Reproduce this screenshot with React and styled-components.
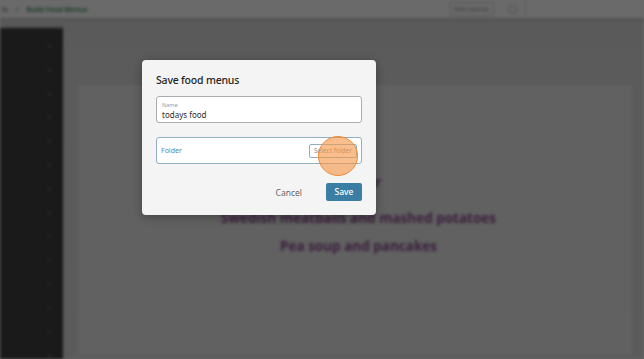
import React from "react";
import styled, { createGlobalStyle } from "styled-components";

const GlobalStyle = createGlobalStyle`
  html, body {
    margin: 0;
    padding: 0;
    width: 644px;
    height: 359px;
    overflow: hidden;
    font-family: "Noto Sans", "Open Sans", sans-serif;
  }
`;

const menus = ["Swedish meatballs and mashed potatoes", "Pea soup and pancakes"];

export default function App() {
  return (
    <>
      <GlobalStyle />
      <Screen>
        <Page>
          <TopBar>
            <Crumbs>
              <CrumbMuted>ts</CrumbMuted>
              <CrumbMuted>/</CrumbMuted>
              <CrumbCurrent>Build Food Menus</CrumbCurrent>
            </Crumbs>
            <TopActions>
              <GhostButton>Edit Layouts</GhostButton>
              <RoundIcon />
              <Divider />
            </TopActions>
          </TopBar>
          <Body>
            <Sidebar>
              {Array.from({ length: 14 }).map((_, i) => (
                <NavDot key={i} />
              ))}
            </Sidebar>
            <Main>
              <Panel>
                <MenuHeading>Dinner</MenuHeading>
                {menus.map(m => (
                  <MenuLine key={m}>{m}</MenuLine>
                ))}
              </Panel>
            </Main>
          </Body>
        </Page>

        <Backdrop />

        <Dialog>
          <Title>Save food menus</Title>
          <NameField>
            <FieldLabel>Name</FieldLabel>
            <FieldValue>todays food</FieldValue>
          </NameField>
          <FolderField>
            <FolderLabel>Folder</FolderLabel>
            <SelectButton>Select folder</SelectButton>
          </FolderField>
          <Actions>
            <TextButton>Cancel</TextButton>
            <PrimaryButton>Save</PrimaryButton>
          </Actions>
          <ClickMarker />
        </Dialog>
      </Screen>
    </>
  );
}

const Screen = styled.div`
  position: relative;
  width: 644px;
  height: 359px;
  overflow: hidden;
`;

const Page = styled.div`
  display: flex;
  flex-direction: column;
  height: 100%;
  background: #d9d9d9;
  filter: blur(1.4px);
`;

const TopBar = styled.header`
  height: 18px;
  flex: none;
  background: #fcfcfc;
  display: flex;
  align-items: center;
  justify-content: space-between;
  box-shadow: 0 2px 4px rgba(0, 0, 0, 0.12);
  position: relative;
  z-index: 1;
`;

const Crumbs = styled.div`
  display: flex;
  align-items: center;
  gap: 8px;
  font-size: 7px;
  margin-left: 2px;
`;

const CrumbMuted = styled.span`
  color: #555;
`;

const CrumbCurrent = styled.span`
  color: #2e8a50;
  font-weight: 600;
`;

const TopActions = styled.div`
  display: flex;
  align-items: center;
  gap: 14px;
  margin-right: 118px;
`;

const GhostButton = styled.div`
  height: 12px;
  padding: 0 4px;
  border: 1px solid #cfcfcf;
  border-radius: 2px;
  font-size: 6px;
  line-height: 12px;
  color: #777;
`;

const RoundIcon = styled.div`
  width: 7px;
  height: 7px;
  border-radius: 50%;
  border: 1.5px solid #bbb;
`;

const Divider = styled.div`
  width: 1px;
  height: 18px;
  background: #ddd;
  margin-left: -6px;
`;

const Body = styled.div`
  flex: 1;
  display: flex;
  min-height: 0;
`;

const Sidebar = styled.nav`
  width: 63px;
  margin-top: 10px;
  background: #3e3e3e;
  box-shadow: 2px 0 5px rgba(0, 0, 0, 0.35);
  display: flex;
  flex-direction: column;
  align-items: flex-end;
  gap: 20.8px;
  padding: 17px 12px 0 0;
  box-sizing: border-box;
`;

const NavDot = styled.span`
  width: 3px;
  height: 3px;
  border-radius: 50%;
  background: #6e6e6e;
`;

const Main = styled.main`
  flex: 1;
  display: flex;
  padding: 67px 12px 4px 15px;
  background: linear-gradient(#d7d7d7, #dadada);
`;

const Panel = styled.section`
  flex: 1;
  background: #e6e6e6;
  display: flex;
  flex-direction: column;
  align-items: center;
  padding: 88px 0 0 7px;
`;

const MenuLine = styled.div`
  font-family: "Open Sans", "Noto Sans", sans-serif;
  font-size: 13.5px;
  font-weight: 700;
  color: #8a4a90;
  line-height: 19px;
  margin-bottom: 9px;
`;

const MenuHeading = styled(MenuLine)`
  margin-bottom: 17px;
`;

const Backdrop = styled.div`
  position: absolute;
  inset: 0;
  background: rgba(0, 0, 0, 0.58);
`;

const Dialog = styled.div`
  position: absolute;
  left: 142px;
  top: 60px;
  width: 234px;
  box-sizing: border-box;
  padding: 12px 14px 14px;
  background: #f4f4f4;
  border-radius: 4px;
  box-shadow: 0 2px 10px rgba(0, 0, 0, 0.3);
  display: flex;
  flex-direction: column;
`;

const Title = styled.h2`
  margin: 0 0 8px;
  font-size: 10.5px;
  letter-spacing: -0.2px;
  line-height: 16px;
  font-weight: 500;
  color: #242424;
`;

const FieldBox = styled.div`
  height: 27px;
  box-sizing: border-box;
  background: #fff;
  border-radius: 3px;
`;

const NameField = styled(FieldBox)`
  border: 1px solid #a9adb2;
  padding: 4px 5px 0;
  display: flex;
  flex-direction: column;
  margin-bottom: 14px;
`;

const FieldLabel = styled.span`
  font-size: 5.5px;
  line-height: 8px;
  color: #9a9a9a;
`;

const FieldValue = styled.span`
  font-size: 8px;
  line-height: 12px;
  color: #2c2c2c;
`;

const FolderField = styled(FieldBox)`
  border: 1px solid #8fb0c4;
  padding: 0 4px;
  display: flex;
  align-items: center;
  justify-content: space-between;
  margin-bottom: 19px;
`;

const FolderLabel = styled.span`
  font-size: 7px;
  color: #5289a8;
`;

const SelectButton = styled.div`
  width: 48px;
  height: 14px;
  box-sizing: border-box;
  border: 1px solid #8fb0c4;
  border-radius: 2px;
  font-size: 6.5px;
  line-height: 12px;
  text-align: center;
  color: #8a8a8a;
  background: #fff;
`;

const Actions = styled.div`
  display: flex;
  justify-content: flex-end;
  align-items: center;
  gap: 24px;
`;

const TextButton = styled.span`
  font-size: 8.5px;
  color: #666;
`;

const PrimaryButton = styled.div`
  width: 36px;
  height: 18px;
  border-radius: 2px;
  background: #3a7fa3;
  color: #fff;
  font-size: 8.5px;
  font-weight: 500;
  line-height: 18px;
  text-align: center;
`;

const ClickMarker = styled.div`
  position: absolute;
  left: 176px;
  top: 76px;
  width: 40px;
  height: 40px;
  box-sizing: border-box;
  border-radius: 50%;
  border: 1.5px solid #ee8a36;
  background: rgba(245, 150, 70, 0.62);
`;
